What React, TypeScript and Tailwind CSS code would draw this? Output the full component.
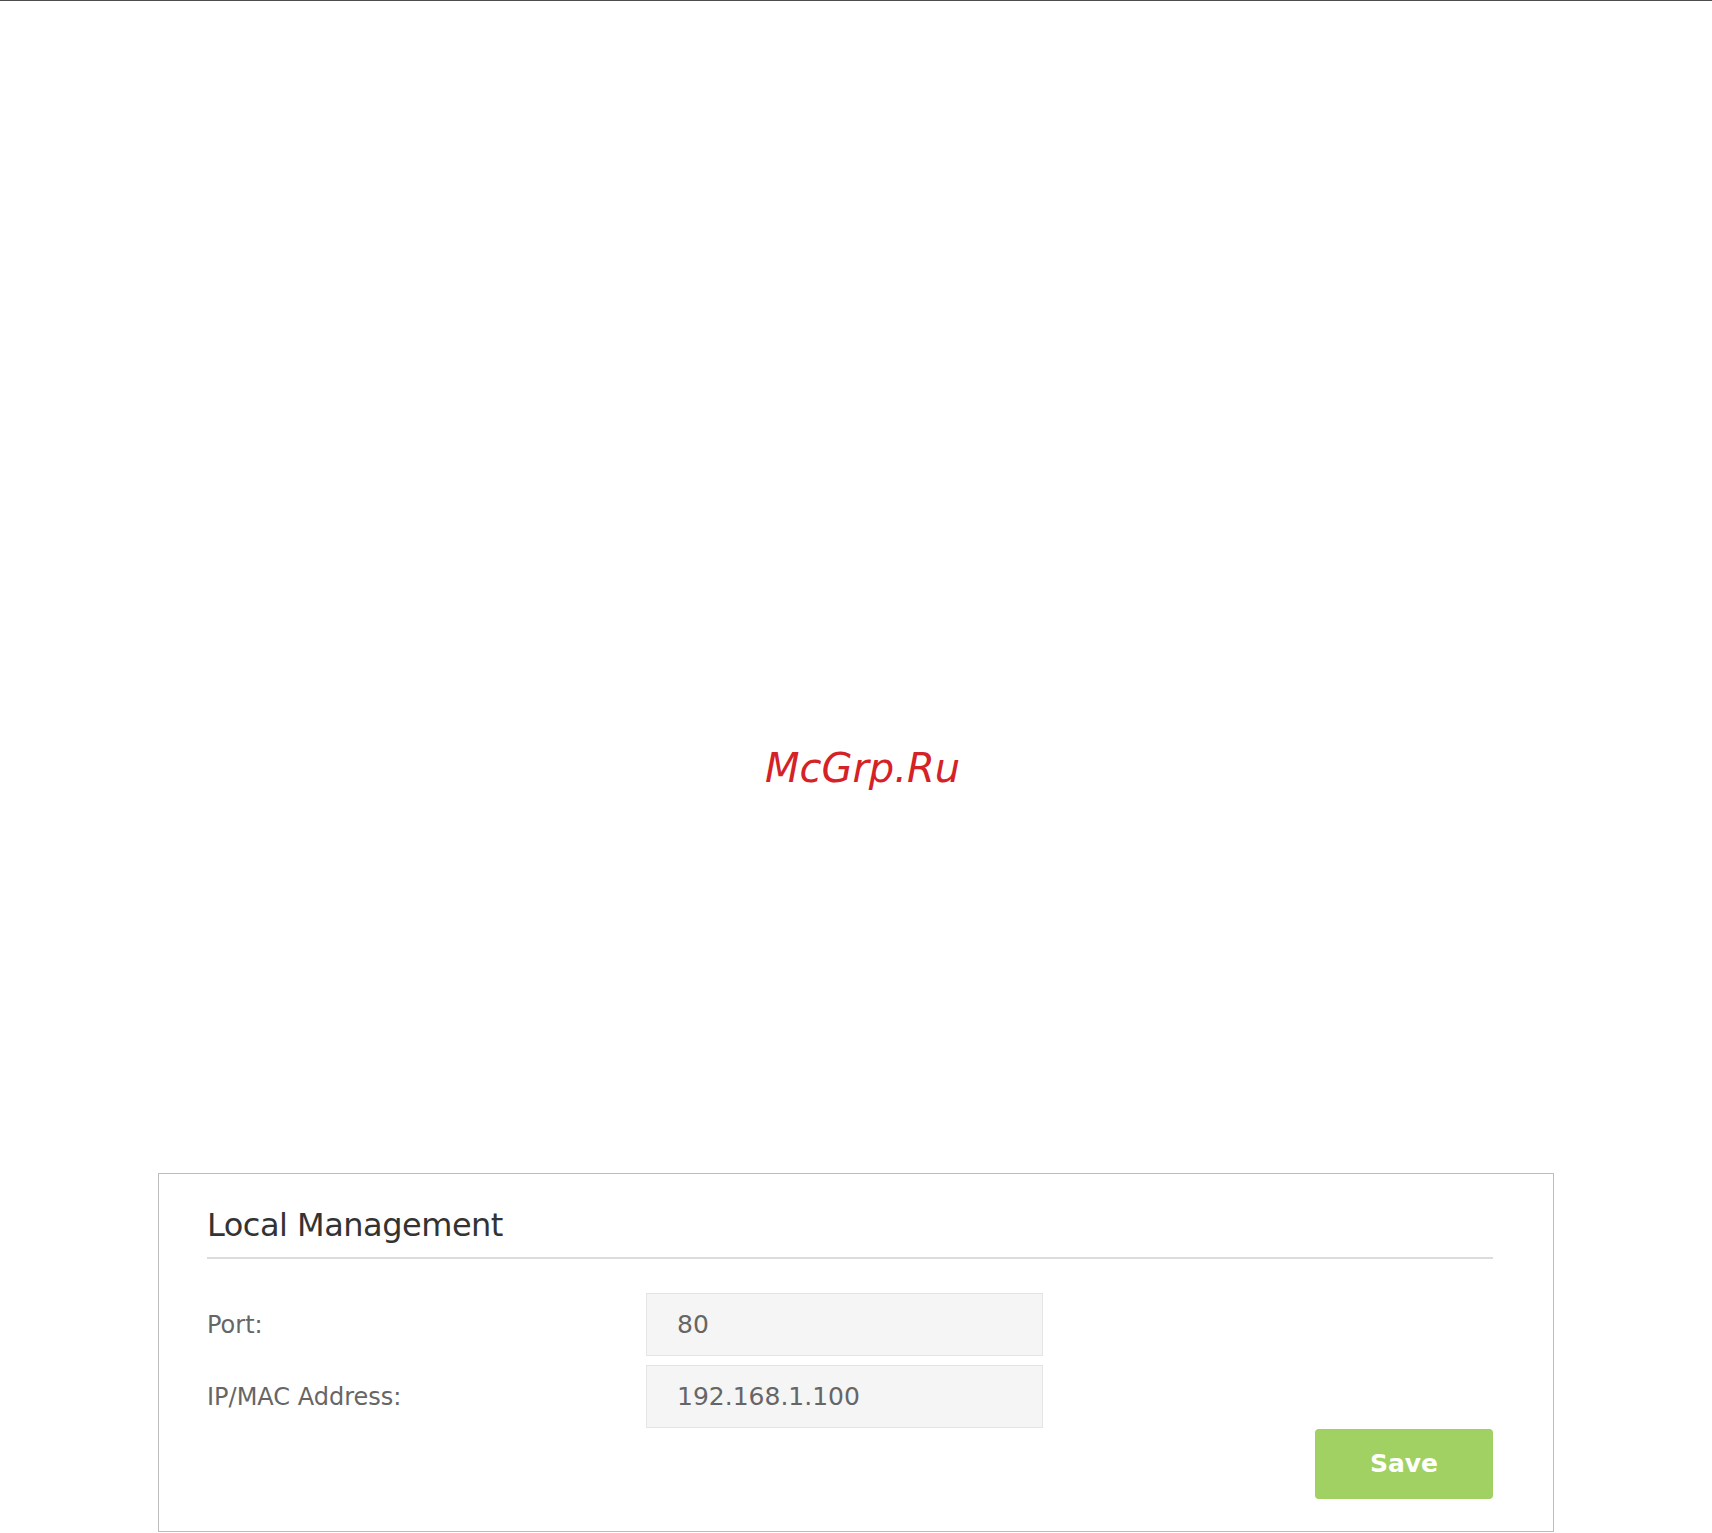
export default function App() {
  const font = { fontFamily: '"DejaVu Sans", Verdana, sans-serif' };
  return (
    <div className="w-[1712px] h-[1533px] bg-white overflow-hidden font-['DejaVu_Sans',Verdana,sans-serif]">
      <div className="h-px bg-[#4d4d4d]" />
      <div className="flex justify-center pl-[13px] mt-[743px] h-[48px]">
        <span className="text-[40px] leading-[48px] italic text-[#d52226] font-['DejaVu_Sans',sans-serif]">
          McGrp.Ru
        </span>
      </div>
      <div className="mt-[381px] mx-[158px] border border-[#bdbdbd] bg-white pl-[48px] pr-[60px] pt-[31px] pb-[32px]">
        <div className="border-b-2 border-[#dcdcdc] pb-[12px]">
          <h2 className="text-[32px] leading-[40px] tracking-[-0.5px] text-[#333333] font-normal">
            Local Management
          </h2>
        </div>
        <div className="mt-[34px] flex flex-col gap-[9px]">
          <div className="flex items-center">
            <div className="w-[439px] text-[24px] leading-[30px] text-[#666666]">Port:</div>
            <div className="w-[397px] h-[63px] bg-[#f5f5f5] border border-[#e4e4e4] flex items-center pl-[30px] text-[25px] text-[#666666]">
              80
            </div>
          </div>
          <div className="flex items-center">
            <div className="w-[439px] text-[24px] leading-[30px] text-[#666666]">IP/MAC Address:</div>
            <div className="w-[397px] h-[63px] bg-[#f5f5f5] border border-[#e4e4e4] flex items-center pl-[30px] text-[25px] text-[#666666]">
              192.168.1.100
            </div>
          </div>
        </div>
        <div className="flex justify-end mt-px">
          <button className="w-[178px] h-[70px] rounded-[4px] bg-[#a2d163] text-white font-bold text-[25px] flex items-center justify-center">
            Save
          </button>
        </div>
      </div>
    </div>
  );
}
